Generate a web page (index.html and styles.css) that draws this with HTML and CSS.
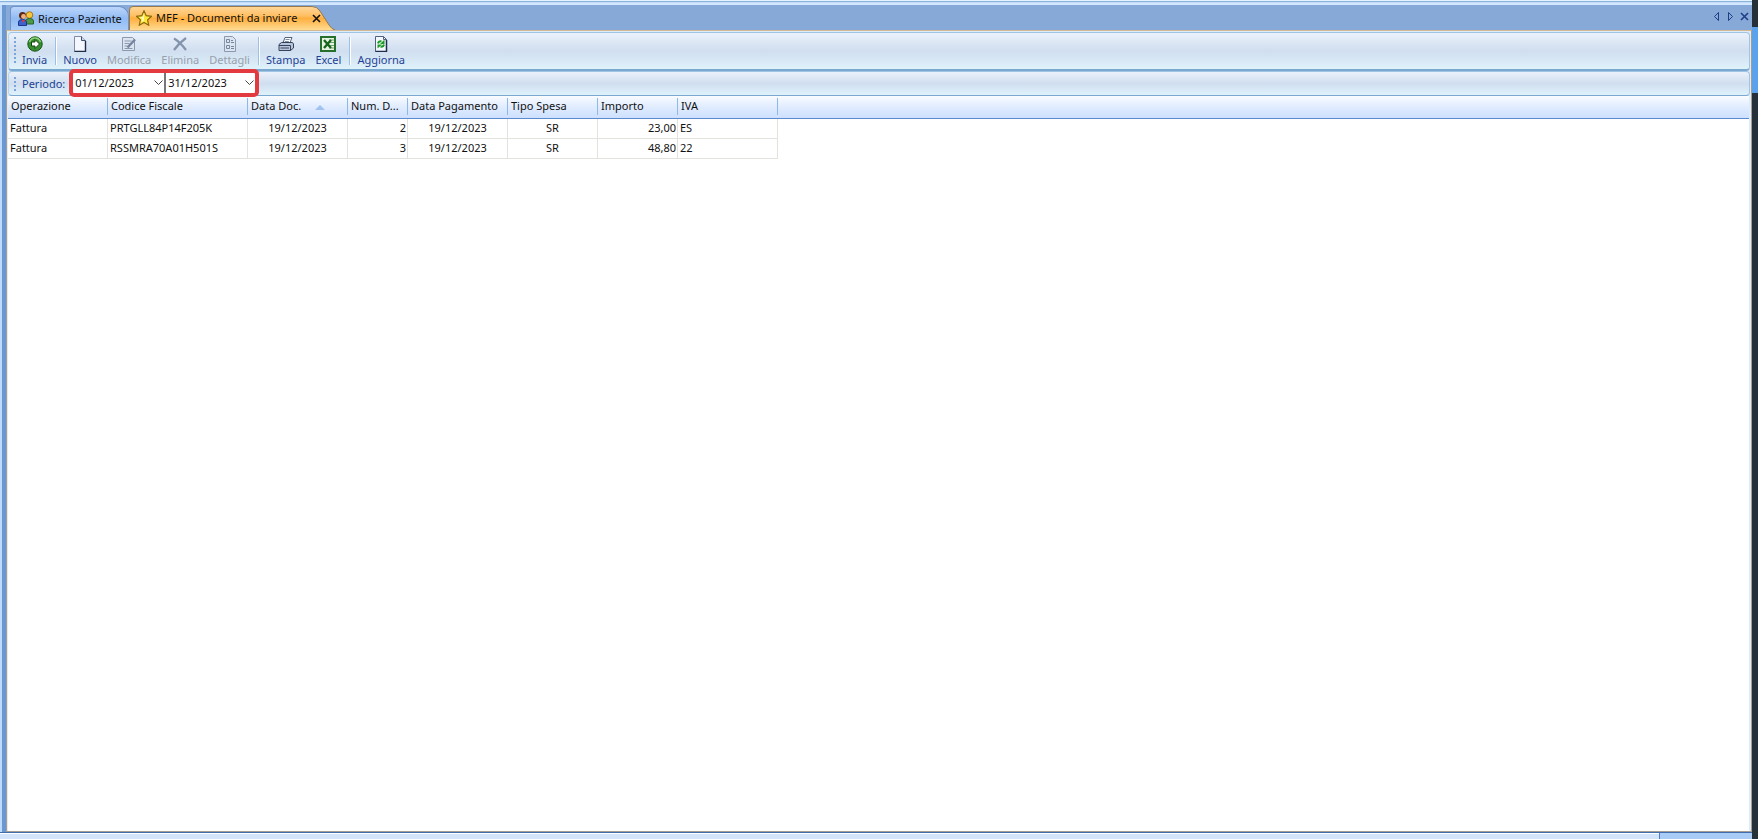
FILE: index.html
```html
<!DOCTYPE html>
<html lang="it">
<head>
<meta charset="utf-8">
<title>MEF - Documenti da inviare</title>
<link rel="stylesheet" href="styles.css">
</head>
<body>
<div class="app">
  <main class="window">
    <div class="topline"></div>
    <div class="body">
      <nav class="tabs">
        <button class="tab">
          <svg class="icon" viewBox="0 0 16 16"><circle cx="11.5" cy="4" r="3.3" fill="#f6c73a" stroke="#a8741c"/><path d="M7.500 13V10q0-2.500 4-2.500t4 2.500v3z" fill="#4f9a48" stroke="#286326"/><circle cx="4.500" cy="4.500" r="3.500" fill="#5a2814"/><circle cx="5.500" cy="5.500" r="2.400" fill="#f0b080"/><path d="M.5 14.500V11q0-2.500 4-2.500t4 2.500v3.500z" fill="#3d63d0" stroke="#1c3788"/><path d="M4 9l1.500 3L7 9z" fill="#e33"/></svg>
          <span>Ricerca Paziente</span>
        </button>
        <div class="tab-active">
          <svg class="tab-shape" viewBox="0 0 206 24" preserveAspectRatio="none"><defs><linearGradient id="o" x2="0" y2="1"><stop offset="0" stop-color="#ffd79a"/><stop offset=".4" stop-color="#ffbf62"/><stop offset=".5" stop-color="#ffae3e"/><stop offset="1" stop-color="#ffdc92"/></linearGradient></defs><path d="M.5 24V4Q.5.5 4 .5H183Q188 .5 191 5L200 19Q203 23.500 206 24" fill="url(#o)" stroke="#98784a"/></svg>
          <button class="tab-label">
            <svg class="icon" viewBox="0 0 16 16"><path d="M8 .8l2.200 4.900 5.300.6-3.900 3.600 1.100 5.300L8 12.500l-4.700 2.700 1.100-5.300L.5 6.300l5.300-.6z" fill="#ffe63b" stroke="#8a6810" stroke-width="1.200"/><path d="M8 3.500v7L5.500 12l.8-3L4 7.200l2.800-.4z" fill="#fffbb8"/></svg>
            <span>MEF - Documenti da inviare</span>
          </button>
          <button class="close" aria-label="Chiudi scheda"><svg viewBox="0 0 9 9"><path d="M1 1l7 7M8 1L1 8" stroke="#111" stroke-width="1.600"/></svg></button>
        </div>
        <div class="tab-nav">
          <button aria-label="Precedente"><svg viewBox="0 0 9 9"><path d="M6.500.5v8l-4-4z" fill="none" stroke="#1c3f86"/></svg></button>
          <button aria-label="Successiva"><svg viewBox="0 0 9 9"><path d="M2.500.5v8l4-4z" fill="none" stroke="#1c3f86"/></svg></button>
          <button aria-label="Chiudi"><svg viewBox="0 0 9 9"><path d="M1 1l7 7M8 1L1 8" stroke="#1c3f86" stroke-width="1.600"/></svg></button>
        </div>
      </nav>
      <section class="panel">
        <div class="toolbar">
          <i class="grip"></i>
          <button class="tool"><svg class="icon" viewBox="0 0 16 16"><circle cx="8" cy="8" r="7.200" fill="#35912d" stroke="#174f16"/><path d="M2.500 6Q4 2 8 2t5.500 4" fill="none" stroke="#8cd27c" stroke-width="1.500"/><path d="M4.500 6H8V3.500L12.500 8 8 12.500V10H4.500z" fill="#fff" stroke="#14420f"/></svg><span>Invia</span></button>
          <i class="sep"></i>
          <button class="tool"><svg class="icon" viewBox="0 0 16 16"><path d="M2.500.5h7l4 4v11h-11z" fill="#f4f7fd" stroke="#7d8ba6"/><path d="M9.500.5v4h4" fill="#c8d5ec" stroke="#42516e"/><path d="M13.500 5v10.500h-11" fill="none" stroke="#202c4c" stroke-width="1.400"/></svg><span>Nuovo</span></button>
          <button class="tool" disabled><svg class="icon" viewBox="0 0 16 16"><path d="M1.500 1.500h10l2 2v11h-12z" fill="#dce4f0" stroke="#8b99b0"/><path d="M3.500 5h7M3.500 7.500h5M3.500 10h3M3.500 12.500h8" stroke="#8b99b0"/><path d="M6.500 11.500L14 3.500" stroke="#75849e" stroke-width="2.500"/></svg><span>Modifica</span></button>
          <button class="tool" disabled><svg class="icon" viewBox="0 0 16 16"><path d="M2 2.500Q8 6 14 14M14 2Q7 7 2 14" fill="none" stroke="#8493ac" stroke-width="2.200"/></svg><span>Elimina</span></button>
          <button class="tool" disabled><svg class="icon" viewBox="0 0 16 16"><path d="M2.500.5h8l3 3v12h-11z" fill="#dce4f0" stroke="#8b99b0"/><path d="M4.500 3.500h3v3h-3zM4.500 9.500h3v3h-3z" fill="none" stroke="#77869f"/><path d="M9 4.500h2M9 6.500h3M9 10.500h3M9 12.500h3" stroke="#77869f"/></svg><span>Dettagli</span></button>
          <i class="sep"></i>
          <button class="tool"><svg class="icon" viewBox="0 0 16 16"><path d="M4.500 8L7 1.500h7L11.500 8z" fill="#fff" stroke="#53627c"/><path d="M7.500 3.500h4M6.800 5.500h4" stroke="#7b8ba5"/><path d="M1 8.500L3.500 6.500h11l1 1.500v4l-3 2.500H1z" fill="#b9c5d8" stroke="#35425e"/><path d="M1 9.500h11.500v5M2.500 12h8.500" fill="none" stroke="#35425e"/></svg><span>Stampa</span></button>
          <button class="tool"><svg class="icon" viewBox="0 0 16 16"><path d="M1 1h14v14H1z" fill="#e7f2e2" stroke="#25702b" stroke-width="2"/><path d="M9 4h5M10 6.500h4M10 9.500h4M9 12h5" stroke="#6fa76f"/><path d="M4 4l7 8M11 4l-7 8" stroke="#17651e" stroke-width="2.400"/></svg><span>Excel</span></button>
          <i class="sep"></i>
          <button class="tool"><svg class="icon" viewBox="0 0 16 16"><path d="M2.500.5h8l3 3v12h-11z" fill="#f4f8fd" stroke="#51617e"/><path d="M10.500.5v3h3" fill="none" stroke="#51617e"/><path d="M13.500 4v11.500h-11" fill="none" stroke="#1f2d53" stroke-width="1.500"/><path d="M5 7.500q.5-2.500 3.500-2.200M11 8.500q-.5 2.500-3.500 2.200" fill="none" stroke="#1d9a24" stroke-width="1.900"/><path d="M11.500 3.500V8H7zM4.500 12.500V8.500H9z" fill="#1d9a24"/></svg><span>Aggiorna</span></button>
        </div>
        <form class="toolbar filter">
          <i class="grip"></i>
          <label for="from">Periodo:</label>
          <div class="range">
            <span class="combo"><input id="from" value="01/12/2023"><button type="button" aria-label="Apri calendario iniziale"><svg viewBox="0 0 9 5"><path d="M.5.5l4 4 4-4" fill="none" stroke="#444"/></svg></button></span>
            <span class="combo"><input aria-label="Data finale" value="31/12/2023"><button type="button" aria-label="Apri calendario finale"><svg viewBox="0 0 9 5"><path d="M.5.5l4 4 4-4" fill="none" stroke="#444"/></svg></button></span>
          </div>
        </form>
        <div class="grid">
          <table>
            <colgroup><col class="c100"><col class="c140"><col class="c100"><col class="c60"><col class="c100"><col class="c90"><col class="c80"><col class="c100"><col></colgroup>
            <thead><tr><th>Operazione</th><th>Codice Fiscale</th><th>Data Doc.<i class="sort"></i></th><th>Num. D...</th><th>Data Pagamento</th><th>Tipo Spesa</th><th>Importo</th><th>IVA</th><th></th></tr></thead>
            <tbody>
              <tr><td>Fattura</td><td>PRTGLL84P14F205K</td><td class="mid">19/12/2023</td><td class="num">2</td><td class="mid">19/12/2023</td><td class="mid">SR</td><td class="num">23,00</td><td>ES</td><td></td></tr>
              <tr><td>Fattura</td><td>RSSMRA70A01H501S</td><td class="mid">19/12/2023</td><td class="num">3</td><td class="mid">19/12/2023</td><td class="mid">SR</td><td class="num">48,80</td><td>22</td><td></td></tr>
            </tbody>
          </table>
        </div>
      </section>
    </div>
    <footer class="status"><span></span><span></span></footer>
  </main>
  <aside class="desktop"><i></i></aside>
</div>
</body>
</html>
```
FILE: styles.css
```css
* { box-sizing: border-box; }
body { margin: 0; font-family: "Noto Sans", "Open Sans", sans-serif; font-size: 11px; line-height: 16px; color: #111; }
button, input { font: inherit; color: inherit; border: 0; background: none; padding: 0; margin: 0; }
svg { display: block; }
.icon { width: 16px; height: 16px; flex: none; }
.app { display: flex; height: 100vh; }
.window { flex: 1; min-width: 0; display: flex; flex-direction: column; background: #bfdbff; }
.topline { height: 5px; flex: none; background: #c4dcf8; border-top: 1px solid #e4f4ff; border-bottom: 2px solid #d2e8ff; box-shadow: inset 0 1px #8bb2da; }
.body { flex: 1; min-height: 0; display: flex; flex-direction: column; padding-left: 6px; background: linear-gradient(90deg, #bfdbff 0 2px, #6b98d0 2px 6px, #86a9d8 6px); }
.tabs { height: 25px; flex: none; display: flex; padding: 1px 3px 0 4px; background: #86a9d8; }
.tab { height: 24px; width: 119px; padding-left: 7px; display: flex; align-items: center; gap: 4px; border: 1px solid #6f92c8; border-bottom: 0; border-radius: 4px 10px 0 0; background: linear-gradient(#bcd6fb, #91bbf2 50%, #a9ccf8); white-space: nowrap; }
.tab-active { position: relative; width: 206px; height: 24px; display: flex; align-items: center; justify-content: space-between; padding: 0 14px 0 7px; }
.tab-shape { position: absolute; inset: 0; width: 100%; height: 100%; }
.tab-label { position: relative; display: flex; gap: 4px; align-items: center; white-space: nowrap; }
.close { position: relative; }
.close svg { width: 9px; height: 9px; }
.tab-nav { margin-left: auto; display: flex; align-items: center; gap: 5px; padding-bottom: 4px; }
.tab-nav svg { width: 9px; height: 9px; }
.panel { flex: 1; min-height: 0; display: flex; flex-direction: column; border: 1px solid #a89c90; border-top-color: #d6b890; background: #dcecfb; }
.toolbar { height: 39px; flex: none; margin: 1px 1px 0; display: flex; align-items: center; padding-left: 5px; border: 1px solid #9fc4e4; border-bottom: 2px solid #7ba8cf; border-left-color: #b5d4f0; border-radius: 4px; background: linear-gradient(#eaf1fb, #d0deef 50%, #dff2fb); }
.grip { width: 2px; height: 28px; margin-right: 1px; background: repeating-linear-gradient(#7ca4dc 0 2px, transparent 2px 4px); }
.sep { width: 2px; height: 28px; margin: 0 1px 0 3px; border-left: 1px solid #9dbfe5; background: #fff; }
.tool { display: flex; flex-direction: column; align-items: center; padding: 1px 5px 0; color: #1e4294; line-height: 15px; }
.tool:disabled { color: #98a0ac; }
.filter { height: 25px; margin-top: 0; border-bottom-width: 1px; }
.filter .grip { height: 14px; margin-right: 6px; }
.filter label { color: #1e4294; }
.range { position: relative; display: flex; height: 28px; margin-left: 4px; margin-bottom: 2px; border: 4px solid #e23a3f; border-radius: 5px; background: #fff; }
.combo { display: flex; align-items: center; width: 91px; padding-left: 2px; }
.combo + .combo { border-left: 2px solid #777; padding-left: 2px; }
.combo input { flex: 1; min-width: 0; width: 0; }
.combo svg { width: 9px; height: 5px; }
.combo button { padding: 4px 1px 4px 4px; }
.grid { flex: 1; min-height: 0; margin: 0 2px 0 1px; background: #fff; }
table { width: 100%; border-collapse: separate; border-spacing: 0; table-layout: fixed; }
.c60 { width: 60px; } .c80 { width: 80px; } .c90 { width: 90px; } .c100 { width: 100px; } .c140 { width: 140px; }
th { height: 23px; padding: 0 3px 2px; font-weight: 400; text-align: left; white-space: nowrap; border-bottom: 1px solid #5b8ad0; background: linear-gradient(90deg, transparent calc(100% - 1px), #8db8e8 0) 0 2px / 100% 17px no-repeat, linear-gradient(#fafcff, #e0ecff 50%, #cde0ff); }
th:last-child { background: linear-gradient(#fafcff, #e0ecff 50%, #cde0ff); }
td { height: 20px; padding: 0 2px 2px; border-right: 1px solid #e4e2dc; border-bottom: 1px solid #e4e2dc; white-space: nowrap; }
td:last-child { border: 0; }
.mid { text-align: center; }
.num { text-align: right; padding-right: 1px; }
.sort { display: inline-block; margin-left: 14px; border: 5px solid transparent; border-top: 0; border-bottom: 5px solid #9fc2f2; vertical-align: middle; }
.status { height: 7px; flex: none; display: flex; border-top: 1px solid #3f6dae; background: #a9ccf6; }
.status span:first-child { flex: 1; border-top: 1px solid #fff; background: #d2e3fa; }
.status span:last-child { width: 93px; border-left: 1px solid #4f7fc0; }
.desktop { width: 6px; flex: none; padding-top: 27px; background: #253038; }
.desktop i { display: block; height: 66px; background: #5aa2ec; }
```
